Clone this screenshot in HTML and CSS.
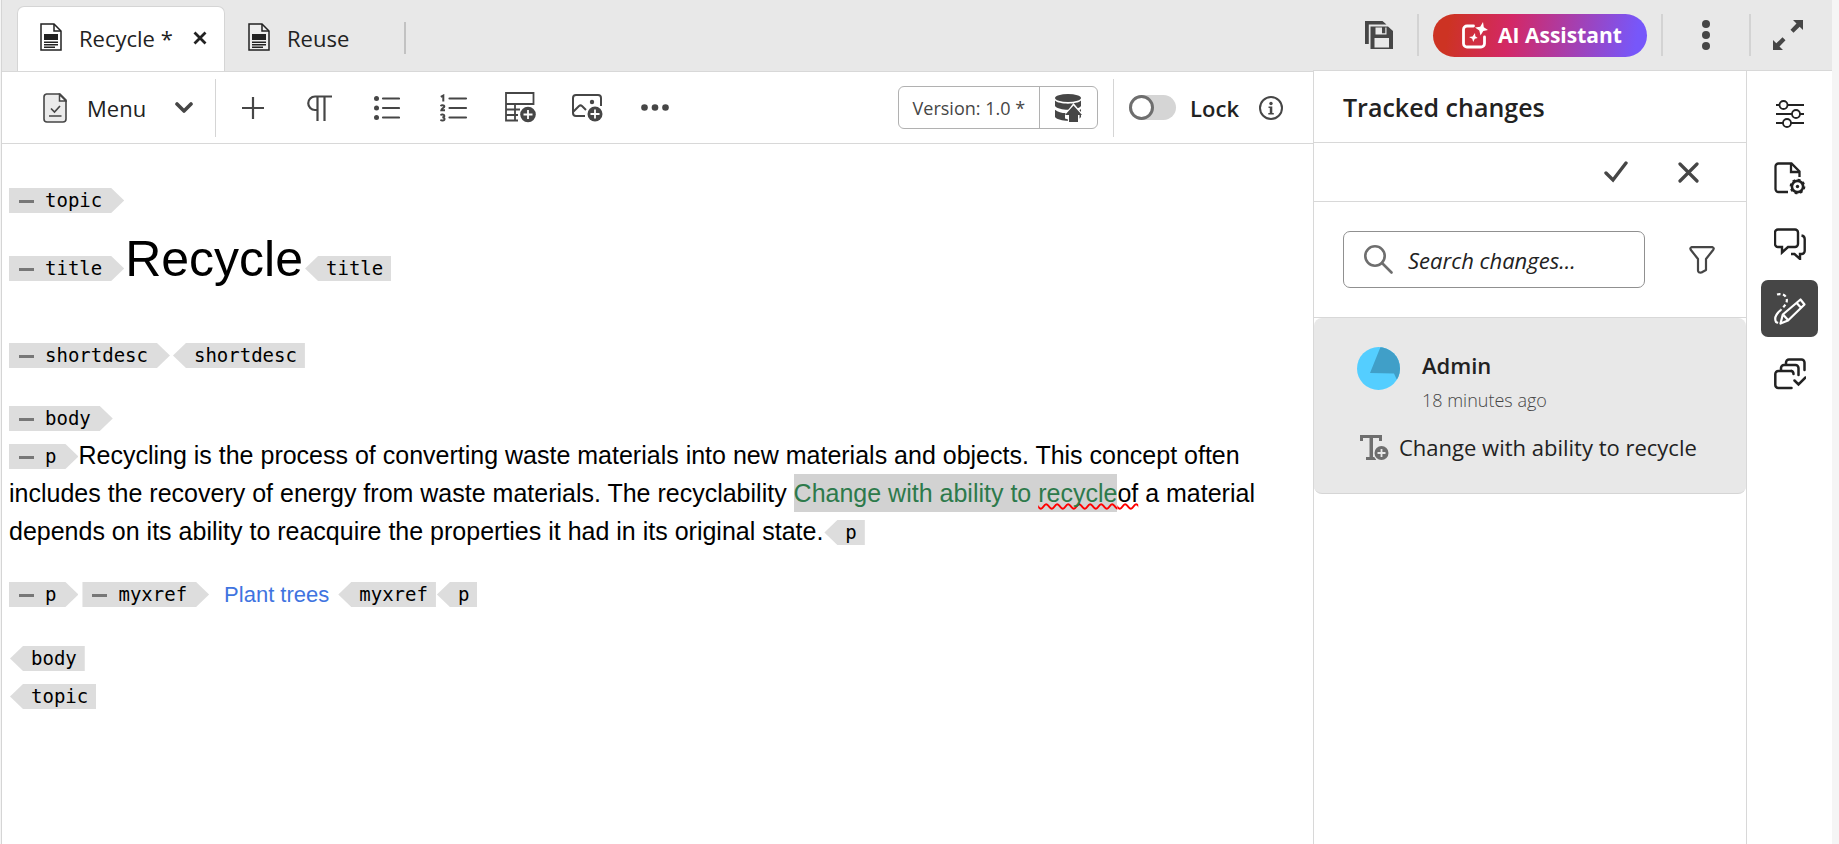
FILE: index.html
```html
<!DOCTYPE html>
<html lang="en">
<head>
<meta charset="utf-8">
<title>Editor</title>
<link rel="stylesheet" href="styles.css">
</head>
<body>
<div class="app">
  <header class="topbar">
    <nav class="tabs" aria-label="Open files">
      <div class="tab tab-active">
        <svg class="icon-file" viewBox="0 0 22 28"><path d="M1 1h13l7 7v19H1z" fill="#fff" stroke="#222" stroke-width="1.5"/><path d="M14 1v7h7" fill="none" stroke="#222" stroke-width="1.5"/><path d="M4 11h14v6H4zM4 18.500h14v1.500H4zM4 21h14v1.500H4zM4 23.500h11v1.500H4z" fill="#222"/></svg>
        <a class="tab-label" href="#recycle">Recycle *</a>
        <button class="tab-close" aria-label="Close tab"><svg width="14" height="14" viewBox="0 0 14 14"><path d="M1.500 1.500l11 11M12.500 1.500l-11 11" stroke="#222" stroke-width="2.800"/></svg></button>
      </div>
      <div class="tab">
        <svg class="icon-file" viewBox="0 0 22 28"><path d="M1 1h13l7 7v19H1z" fill="#eee" stroke="#222" stroke-width="1.5"/><path d="M14 1v7h7" fill="none" stroke="#222" stroke-width="1.5"/><path d="M4 11h14v6H4zM4 18.500h14v1.500H4zM4 21h14v1.500H4zM4 23.500h11v1.500H4z" fill="#222"/></svg>
        <a class="tab-label" href="#reuse">Reuse</a>
      </div>
      <span class="tab-divider"></span>
    </nav>
    <div class="top-actions">
      <button class="icon-button" aria-label="Save all"><svg width="28" height="28" viewBox="0 0 28 28"><path d="M0 0h17.500l4 3.500H3.800V23H0z" fill="#464646"/><path d="M5.500 5.500H23l5 4.500V28H5.500z" fill="#464646"/><path d="M10.500 6.500h1.500v7h-1.500zM12 12.300h9v1.200h-9zM20.300 6.500h1.200v7h-1.200zM12 6.500h5v5.800h-5z" fill="#e8e8e8"/><path d="M9.500 17h14.500v9.500H9.500z" fill="#e8e8e8"/></svg></button>
      <span class="top-divider"></span>
      <button class="ai-button"><svg width="26" height="27" viewBox="0 0 26 27"><path d="M11.500 4H5a3.500 3.500 0 0 0-3.500 3.500v14A3.500 3.500 0 0 0 5 25h14a3.500 3.500 0 0 0 3.500-3.500V15" fill="none" stroke="#fff" stroke-width="2.800" stroke-linecap="round"/><path d="M21 0l.8 5.300L26 8l-4.700 1.100-2.800 4.400-1.200-4.900L13 5.500l5.200-.7zM13 11l.3 3.200 2.400 1.800-2.900.8-1.600 3.200-1-3.200L7 15l3.500-.6z" fill="#fff"/></svg><span>AI Assistant</span></button>
      <span class="top-divider"></span>
      <button class="icon-button icon-more" aria-label="More actions"><svg width="8" height="30" viewBox="0 0 8 30"><g fill="#464646"><circle cx="4" cy="4" r="4"/><circle cx="4" cy="15" r="4"/><circle cx="4" cy="26" r="4"/></g></svg></button>
      <span class="top-divider"></span>
      <button class="icon-button icon-expand" aria-label="Expand"><svg width="30" height="30" viewBox="0 0 30 30"><path d="M20 0h10v10l-3.300-3.300-6.200 6-3-3 6-6.200zM10 30H0V20l3.300 3.300 6.200-6 3 3-6 6.200z" fill="#464646"/></svg></button>
    </div>
  </header>

  <div class="workspace">
    <main class="editor-pane">
      <div class="toolbar">
        <button class="menu-button"><svg width="24" height="30" viewBox="0 0 24 30"><path d="M3.500 1H17l6 6v19a3 3 0 0 1-3 3H4a3 3 0 0 1-3-3V4a3 3 0 0 1 2.500-3z" fill="#ebebeb" stroke="#464646" stroke-width="1.600"/><path d="M16.500 1.500V8H23z" fill="#fff" stroke="#464646" stroke-width="1.500"/><path d="M8 15.500l3.500 3.500 5.500-6M6 23h12.500" fill="none" stroke="#464646" stroke-width="1.700"/></svg><span class="menu-label">Menu</span><svg width="18" height="12" viewBox="0 0 18 12"><path d="M2 2l7 7 7-7" fill="none" stroke="#464646" stroke-width="3.600" stroke-linecap="round" stroke-linejoin="round"/></svg></button>
        <span class="tool-divider"></span>
        <div class="tools">
          <button class="tool" aria-label="Add element"><svg width="22" height="22" viewBox="0 0 22 22"><path d="M11 0v22M0 11h22" stroke="#464646" stroke-width="2.200"/></svg></button>
          <button class="tool" aria-label="Paragraph"><svg width="25" height="26" viewBox="0 0 25 26"><path d="M25 1.500H8a6.500 6.500 0 0 0 0 13.500h2M10.500 1v25M17.500 1v25" fill="none" stroke="#464646" stroke-width="2.200"/></svg></button>
          <button class="tool" aria-label="Bulleted list"><svg width="26" height="24" viewBox="0 0 26 24"><g fill="#464646"><circle cx="2.500" cy="2.500" r="2.500"/><circle cx="2.500" cy="12" r="2.500"/><circle cx="2.500" cy="21.500" r="2.500"/></g><path d="M9 2.500h16M9 12h16M9 21.500h16" stroke="#464646" stroke-width="2.200" stroke-linecap="round"/></svg></button>
          <button class="tool" aria-label="Numbered list"><svg width="28" height="28" viewBox="0 0 28 28"><g fill="none" stroke="#464646" stroke-width="2"><path d="M.8 2.800L3.300 1.500v6M.8 12.200c.4-1.300 3.600-1.400 3.500.4-.1 1.300-2.800 1.700-3 3.700h3.700M.8 21.500c.5-1.300 3.600-1.200 3.500.4 0 1.200-1.200 1.400-2 1.400 1 0 2.200.4 2.200 1.700 0 2-3.300 2-3.900.5"/></g><path d="M9.500 4.500h16.500M9.500 14h16.500M9.500 23.500h16.500" stroke="#464646" stroke-width="2.200" stroke-linecap="round"/></svg></button>
          <button class="tool" aria-label="Insert table"><svg width="31" height="31" viewBox="0 0 31 31"><path d="M13 28.500H1V1h27.500v12M1 12h27M1 17.500h14M1 23h12M10 12v16.500" fill="none" stroke="#464646" stroke-width="1.800"/><circle cx="23" cy="22.500" r="9" fill="#fff"/><circle cx="23" cy="22.500" r="7.800" fill="#464646"/><path d="M23 18v9M18.500 22.500h9" stroke="#fff" stroke-width="1.800"/></svg></button>
          <button class="tool" aria-label="Insert image"><svg width="31" height="28" viewBox="0 0 31 28"><path d="M13 22H4a3 3 0 0 1-3-3V4a3 3 0 0 1 3-3h22a3 3 0 0 1 3 3v8M1 18l6-6q1.500-1.200 3 0l4 4" fill="none" stroke="#464646" stroke-width="2"/><circle cx="20" cy="8" r="2.200" fill="#464646"/><circle cx="23" cy="20" r="8.800" fill="#fff"/><circle cx="23" cy="20" r="7.500" fill="#464646"/><path d="M23 15.500v9M18.500 20h9" stroke="#fff" stroke-width="1.800"/></svg></button>
          <button class="tool" aria-label="More tools"><svg width="28" height="7" viewBox="0 0 28 7"><g fill="#464646"><circle cx="3.500" cy="3.500" r="3.300"/><circle cx="14" cy="3.500" r="3.300"/><circle cx="24.500" cy="3.500" r="3.300"/></g></svg></button>
        </div>
        <div class="version">
          <button class="version-label">Version: 1.0 *</button>
          <button class="version-save" aria-label="Save as new version"><svg width="27" height="28" viewBox="0 0 27 28"><ellipse cx="13" cy="4" rx="13" ry="4" fill="#464646"/><path d="M0 6.500c4 4.200 22 4.200 26 0V12c-4 5-22 5-26 0zM0 15c4 4 22 4 26 0v8c-4 5-22 5-26 0z" fill="#464646"/><path d="M0 14.500c4 3.500 8 4 13 3.600" fill="none" stroke="#fff" stroke-width="1.800"/><path d="M18.500 9l10 12h-4v8H13v-3.500l-3-1V20z" fill="#fff"/><path d="M18.500 11.500L27 21h-4v7h-9v-7h-4z" fill="#464646"/></svg></button>
        </div>
        <span class="tool-divider"></span>
        <label class="lock"><input class="lock-switch" type="checkbox" role="switch"><span>Lock</span></label>
        <button class="info" aria-label="Lock information"><svg width="24" height="24" viewBox="0 0 24 24"><circle cx="12" cy="12" r="11" fill="none" stroke="#464646" stroke-width="2"/><circle cx="12" cy="7.500" r="1.700" fill="#464646"/><path d="M9.500 10.500h3.800v6.500h1.500v1.500H9.300V17h1.500v-5H9.500z" fill="#464646"/></svg></button>
      </div>

      <article class="document">
        <div class="line"><span class="tag tag-open"><i class="fold"></i>topic</span></div>
        <h1 class="doc-title"><span class="tag tag-open"><i class="fold"></i>title</span><span class="doc-title-text">Recycle</span><span class="tag tag-close">title</span></h1>
        <p class="line shortdesc"><span class="tag tag-open"><i class="fold"></i>shortdesc</span><span class="tag tag-close">shortdesc</span></p>
        <div class="line"><span class="tag tag-open"><i class="fold"></i>body</span></div>
        <p class="line para"><span class="tag tag-open"><i class="fold"></i>p</span>Recycling is the process of converting waste materials into new materials and objects. This concept often includes the recovery of energy from waste materials. The recyclability <ins class="inserted">Change with ability to <span class="misspelt">recycle</span></ins><span class="misspelt">of</span> a material depends on its ability to reacquire the properties it had in its original state.<span class="tag tag-close">p</span></p>
        <p class="line para"><span class="tag tag-open"><i class="fold"></i>p</span><span class="tag tag-open tag-inner"><i class="fold"></i>myxref</span><a class="xref" href="#plant-trees">Plant trees</a><span class="tag tag-close">myxref</span><span class="tag tag-close">p</span></p>
        <div class="line"><span class="tag tag-close">body</span></div>
        <div class="line"><span class="tag tag-close">topic</span></div>
      </article>
    </main>

    <aside class="panel">
      <h2 class="panel-title">Tracked changes</h2>
      <div class="panel-actions">
        <button class="panel-action" aria-label="Accept"><svg width="24" height="22" viewBox="0 0 24 22"><path d="M2 12l7 7L22 2" fill="none" stroke="#464646" stroke-width="3.400" stroke-linecap="round"/></svg></button>
        <button class="panel-action" aria-label="Reject"><svg width="21" height="21" viewBox="0 0 21 21"><path d="M2 2l17 17M19 2L2 19" stroke="#464646" stroke-width="3.200" stroke-linecap="round"/></svg></button>
      </div>
      <div class="panel-search">
        <label class="search"><svg width="29" height="29" viewBox="0 0 29 29"><circle cx="11" cy="11" r="9.700" fill="none" stroke="#6e6e6e" stroke-width="2.600"/><path d="M18 18l9.500 9.500" stroke="#6e6e6e" stroke-width="2.600" stroke-linecap="round"/></svg><input class="search-input" type="text" placeholder="Search changes..." aria-label="Search changes"></label>
        <button class="filter" aria-label="Filter"><svg width="26" height="28" viewBox="0 0 26 28"><path d="M2.500 1.200h21q2 .8.800 2.500L17 13v11l-4.500 2.500q-3.500.5-3.500-2V13L1.700 3.700Q.7 2 2.500 1.200z" fill="none" stroke="#464646" stroke-width="2.200" stroke-linejoin="round"/></svg></button>
      </div>
      <section class="change">
        <div class="change-head">
          <svg class="avatar" viewBox="0 0 43 43"><defs><clipPath id="round"><circle cx="21.500" cy="21.500" r="21.500"/></clipPath></defs><g clip-path="url(#round)"><path d="M0 0h43v43H0z" fill="#54ceff"/><path d="M23.500 0L13 26l24 .500L39.500 32 43 34V0z" fill="#409fc8"/></g></svg>
          <div class="author"><strong class="author-name">Admin</strong><span class="author-time">18 minutes ago</span></div>
        </div>
        <div class="change-body">
          <svg class="insert-icon" viewBox="0 0 29 25"><path d="M0 0h22v6h-3V3h-6v19h3v3H6v-3h3.500V3H3v3H0z" fill="#6e6e6e"/><circle cx="21.500" cy="18.500" r="8" fill="#e8e8e8"/><circle cx="21.500" cy="18" r="7" fill="#6e6e6e"/><path d="M21.500 14v8M17.500 18h8" stroke="#e8e8e8" stroke-width="1.800"/></svg>
          <p class="change-text">Change with ability to recycle</p>
        </div>
      </section>
    </aside>

    <nav class="rail" aria-label="Panels">
      <button class="rail-button" aria-label="Properties"><svg width="30" height="28" viewBox="0 0 30 28"><path d="M1 5h28M1 14h28M1 23h28" stroke="#222" stroke-width="1.800"/><g fill="#fff" stroke="#222" stroke-width="1.800"><circle cx="8.500" cy="5" r="4"/><circle cx="21" cy="14" r="4"/><circle cx="12" cy="23" r="4"/></g></svg></button>
      <button class="rail-button" aria-label="File properties"><svg width="32" height="33" viewBox="0 0 32 33"><path d="M14 30H4.500a3 3 0 0 1-3-3V4.500a3 3 0 0 1 3-3h13l8 8V15" fill="none" stroke="#222" stroke-width="2.300"/><path d="M17 2v8h8" fill="none" stroke="#222" stroke-width="2.300"/><circle cx="23.500" cy="24.500" r="5.600" fill="#fff" stroke="#222" stroke-width="2.600"/><circle cx="23.500" cy="24.500" r="7" fill="none" stroke="#222" stroke-width="1.700" stroke-dasharray="2.750 2.750"/><circle cx="23.500" cy="24.500" r="1.700" fill="#222"/></svg></button>
      <button class="rail-button" aria-label="Comments"><svg width="32" height="32" viewBox="0 0 32 32"><path d="M4 1.500h17a3 3 0 0 1 3 3V16a3 3 0 0 1-3 3h-7l-6 5.500V19H4a3 3 0 0 1-3-3V4.500a3 3 0 0 1 3-3zM27.500 7.500q3.200.5 3.200 3.500v12a3 3 0 0 1-3 3H26v5l-5.500-5H17" fill="none" stroke="#222" stroke-width="2.400"/></svg></button>
      <button class="rail-button rail-active" aria-label="Tracked changes"><svg width="32" height="32" viewBox="0 0 32 32"><g fill="none" stroke="#fff" stroke-width="2.200" stroke-linejoin="round"><path d="M6.500 30.500l2.300-9L26.500 6.500l4 5L14 27.500zM9 21.500l5 5.500M22.500 9.800l4.500 5"/><path d="M3 1.500c5-1.300 9 .5 9.800 5 .5 4-2.800 7-6 10.500" stroke-dasharray="3.500 2.500"/><path d="M6.800 17C2 21 .2 25.500 2 29l2 1"/></g></svg></button>
      <button class="rail-button" aria-label="Reviews"><svg width="32" height="32" viewBox="0 0 32 32"><g fill="none" stroke="#222" stroke-width="2.500" stroke-linecap="round"><path d="M17.500 30H4.300a3 3 0 0 1-3-3V16a3 3 0 0 1 3-3h13"/><path d="M7 12.500V10a3 3 0 0 1 3-3h11.500a3 3 0 0 1 3 3v7M12 6V4.500a3 3 0 0 1 3-3h12.500a3 3 0 0 1 3 3V12M17.500 13q2 .5 2 3M20.500 22.500l4 4 7-7"/></g></svg></button>
    </nav>
  </div>
</div>
</body>
</html>
```
FILE: styles.css
```css
* {
  box-sizing: border-box;
}

body {
  margin: 0;
  background: #f5f5f5;
  color: #222;
  font-family: "Open Sans", "Noto Sans", sans-serif;
  font-size: 22px;
}

button {
  margin: 0;
  padding: 0;
  border: 0;
  background: none;
  color: inherit;
  font: inherit;
  display: flex;
  align-items: center;
  justify-content: center;
}

svg {
  display: block;
  flex: none;
}

.app {
  display: flex;
  flex-direction: column;
  min-height: 100vh;
  margin: 0 7px 0 1px;
  border-left: 1px solid #d5d5d5;
  background: #fff;
}

/* Top bar */
.topbar {
  display: flex;
  justify-content: space-between;
  height: 71px;
  background: #e8e8e8;
}

.tabs {
  display: flex;
  align-items: flex-end;
  padding-left: 15px;
}

.tab {
  display: flex;
  align-items: center;
  height: 65px;
  padding: 0 17px 2px 22px;
  border: 1px solid transparent;
  border-bottom: 0;
}

.tab-active {
  width: 208px;
  border-color: #d5d5d5;
  border-radius: 7px 7px 0 0;
  background: #fff;
}

.icon-file {
  width: 22px;
  height: 28px;
  margin: 0 17px 2px 0;
}

.tab-label {
  color: #222;
  text-decoration: none;
}

.tab-close {
  margin-left: auto;
}

.tab-divider {
  width: 2px;
  height: 32px;
  margin: 0 0 17px 37px;
  background: #c2c2c2;
}

.top-actions {
  display: flex;
  align-items: center;
  padding: 0 29px 1px 0;
}

.icon-more {
  width: 86px;
}

.icon-expand {
  margin-left: 22px;
}

.top-divider {
  width: 2px;
  height: 42px;
  background: #d3d3d3;
}

.icon-button + .top-divider {
  margin-left: 24px;
}

.icon-more + .top-divider {
  margin-left: 0;
}

.ai-button {
  gap: 10px;
  width: 214px;
  height: 43px;
  margin: 0 14px;
  padding-left: 4px;
  border-radius: 22px;
  background: linear-gradient(100deg, #cd3323 8%, #d32866 36%, #7757fa 94%);
  color: #fff;
  font-size: 21px;
  font-weight: 700;
}

/* Workspace */
.workspace {
  display: flex;
  flex: 1;
}

.editor-pane {
  flex: 1;
  min-width: 0;
  border-top: 1px solid #d8d8d8;
}

.toolbar {
  display: flex;
  align-items: center;
  height: 72px;
  padding: 0 30px 0 41px;
  border-bottom: 1px solid #d8d8d8;
}

.menu-button {
  margin-right: 22px;
}

.menu-label {
  margin: 0 29px 0 20px;
}

.tool-divider {
  width: 1px;
  height: 58px;
  background: #d5d5d5;
}

.tools {
  display: flex;
  margin: 0 auto 0 3px;
}

.tool {
  width: 67px;
  height: 44px;
}

.version {
  display: flex;
  height: 43px;
  margin-right: 15px;
  border: 1px solid #b1b1b1;
  border-radius: 6px;
  color: #464646;
  font-size: 18px;
}

.version-label {
  padding: 0 14px;
}

.version-save {
  width: 58px;
  border-left: 1px solid #b1b1b1;
}

.lock {
  display: flex;
  align-items: center;
  gap: 14px;
  margin-left: 15px;
  font-weight: 600;
}

.lock-switch {
  appearance: none;
  width: 47px;
  height: 25px;
  margin: 0;
  border-radius: 13px;
  background: #d5d5d5;
}

.lock-switch::before {
  content: "";
  display: block;
  width: 25px;
  height: 25px;
  box-sizing: border-box;
  border: 3px solid #6e6e6e;
  border-radius: 50%;
  background: #fff;
}

.info {
  margin-left: 20px;
}

/* Document */
.document {
  padding: 36px 30px 40px 7px;
  color: #000;
  font-family: "Liberation Sans", Arial, sans-serif;
  font-size: 25px;
  line-height: 38px;
}

.line {
  margin: 0;
}

.tag {
  display: inline-block;
  background: #ddd;
  color: #000;
  font-family: "DejaVu Sans Mono", monospace;
  font-size: 19px;
  font-weight: 400;
  line-height: 25px;
  vertical-align: 1px;
}

.tag-open {
  padding: 0 22px 0 10px;
  clip-path: polygon(0 0, calc(100% - 13px) 0, 100% 50%, calc(100% - 13px) 100%, 0 100%);
}

.tag-close {
  margin-left: 1px;
  padding: 0 8px 0 21px;
  clip-path: polygon(13px 0, 100% 0, 100% 100%, 13px 100%, 0 50%);
}

.fold {
  display: inline-block;
  width: 15px;
  height: 3px;
  margin-right: 11px;
  background: #777;
  vertical-align: 4px;
}

.doc-title {
  margin: 11px 0 46px;
  font-size: 50px;
  font-weight: 400;
  line-height: 60px;
}

.doc-title-text {
  margin: 0 1px;
}

.shortdesc {
  margin-bottom: 25px;
}

.shortdesc .tag-close {
  margin-left: 3px;
}

.para {
  margin-bottom: 24px;
}

.inserted {
  padding: 5px 0;
  background: #d2d2d2;
  color: #2d7a4b;
  text-decoration: none;
}

.misspelt {
  text-decoration: underline wavy #f00;
  text-decoration-skip-ink: none;
  text-decoration-thickness: 2px;
}

.tag-inner {
  margin-left: 4px;
}

.xref {
  margin: 0 8px 0 15px;
  color: #3f74e0;
  font-size: 22px;
  text-decoration: none;
}

/* Tracked changes panel */
.panel {
  width: 434px;
  margin-top: -1px;
  border: 1px solid #d8d8d8;
  border-bottom: 0;
  background: #fff;
}

.panel-title {
  display: flex;
  align-items: center;
  height: 72px;
  margin: 0;
  padding-left: 29px;
  border-bottom: 1px solid #d8d8d8;
  font-size: 25px;
  font-weight: 600;
}

.panel-actions {
  display: flex;
  align-items: center;
  justify-content: flex-end;
  gap: 50px;
  height: 59px;
  padding-right: 47px;
  border-bottom: 1px solid #d8d8d8;
}

.panel-search {
  display: flex;
  align-items: center;
  gap: 44px;
  padding: 29px 31px 29px 29px;
  border-bottom: 1px solid #d8d8d8;
}

.search {
  display: flex;
  flex: 1;
  align-items: center;
  gap: 15px;
  min-width: 0;
  height: 57px;
  padding: 0 20px;
  border: 1px solid #909090;
  border-radius: 7px;
}

.search-input {
  flex: 1;
  min-width: 0;
  padding: 0;
  border: 0;
  outline: 0;
  background: none;
  font: inherit;
}

.search-input::placeholder {
  color: #222;
  font-style: italic;
  opacity: 1;
}

.change {
  padding: 29px 20px 19px 43px;
  border-bottom: 1px solid #d5d5d5;
  border-radius: 8px;
  background: #e8e8e8;
}

.change-head {
  display: flex;
  gap: 22px;
}

.avatar {
  width: 43px;
  height: 43px;
}

.author {
  display: flex;
  flex-direction: column;
}

.author-name {
  font-weight: 600;
  line-height: 36px;
}

.author-time {
  color: #464646;
  font-size: 18px;
  font-weight: 300;
  line-height: 34px;
}

.change-body {
  display: flex;
  align-items: center;
  gap: 10px;
  margin: 3px 0 0 3px;
}

.insert-icon {
  width: 29px;
  height: 25px;
}

.change-text {
  margin: 0;
  line-height: 54px;
}

/* Right rail */
.rail {
  display: flex;
  flex-direction: column;
  align-items: center;
  gap: 8px;
  width: 85px;
  margin-top: -1px;
  padding-top: 14px;
  border-top: 1px solid #d8d8d8;
  background: #fff;
}

.rail-button {
  width: 57px;
  height: 57px;
  border-radius: 7px;
}

.rail-active {
  background: #464646;
}
```
